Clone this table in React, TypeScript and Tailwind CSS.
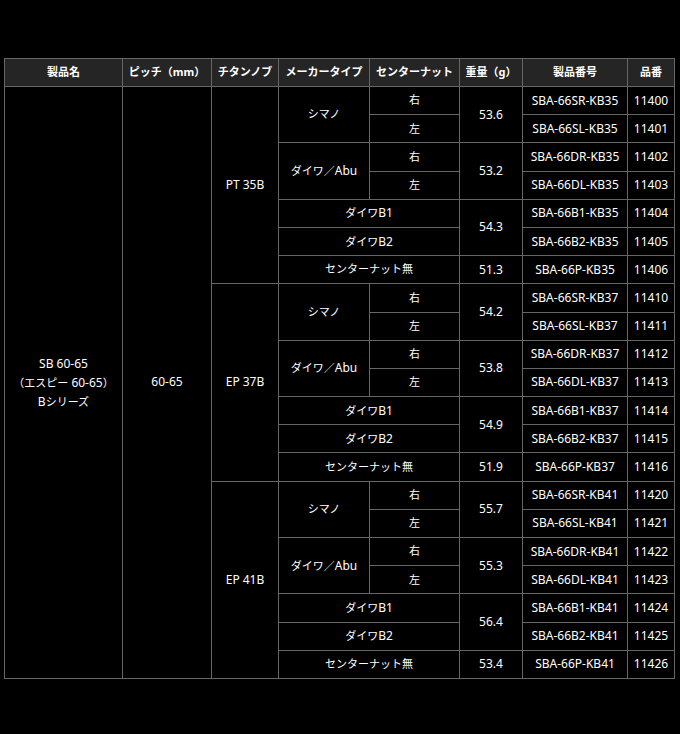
import React from "react";

type Group = {
  knob: string;
  suffix: string;
  weights: [string, string, string, string];
  start: number;
};

const groups: Group[] = [
  { knob: "PT 35B", suffix: "KB35", weights: ["53.6", "53.2", "54.3", "51.3"], start: 11400 },
  { knob: "EP 37B", suffix: "KB37", weights: ["54.2", "53.8", "54.9", "51.9"], start: 11410 },
  { knob: "EP 41B", suffix: "KB41", weights: ["55.7", "55.3", "56.4", "53.4"], start: 11420 },
];

const td = "border border-[#666] text-center align-middle p-0 h-[28.2px]";
// Japanese labels render a touch narrower than the latin parts
const jp = `${td} text-[11px]`;

function GroupRows({ g, first }: { g: Group; first: boolean }) {
  const codes = ["SR", "SL", "DR", "DL", "B1", "B2", "P"];
  const no = (i: number) => String(g.start + i);
  const part = (i: number) => `SBA-66${codes[i]}-${g.suffix}`;
  return (
    <>
      <tr>
        {first && (
          <>
            <td rowSpan={21} className={td}>
              <div className="leading-[19px]">
                SB 60-65
                <br />
                <span className="text-[11px]">（エスピー</span> 60-65<span className="text-[11px]">）</span>
                <br />
                B<span className="text-[11px]">シリーズ</span>
              </div>
            </td>
            <td rowSpan={21} className={td}>
              60-65
            </td>
          </>
        )}
        <td rowSpan={7} className={td}>
          {g.knob}
        </td>
        <td rowSpan={2} className={jp}>
          シマノ
        </td>
        <td className={jp}>右</td>
        <td rowSpan={2} className={td}>
          {g.weights[0]}
        </td>
        <td className={td}>{part(0)}</td>
        <td className={td}>{no(0)}</td>
      </tr>
      <tr>
        <td className={jp}>左</td>
        <td className={td}>{part(1)}</td>
        <td className={td}>{no(1)}</td>
      </tr>
      <tr>
        <td rowSpan={2} className={jp}>
          ダイワ／<span className="text-[12px]">Abu</span>
        </td>
        <td className={jp}>右</td>
        <td rowSpan={2} className={td}>
          {g.weights[1]}
        </td>
        <td className={td}>{part(2)}</td>
        <td className={td}>{no(2)}</td>
      </tr>
      <tr>
        <td className={jp}>左</td>
        <td className={td}>{part(3)}</td>
        <td className={td}>{no(3)}</td>
      </tr>
      <tr>
        <td colSpan={2} className={jp}>
          ダイワ<span className="text-[12px]">B1</span>
        </td>
        <td rowSpan={2} className={td}>
          {g.weights[2]}
        </td>
        <td className={td}>{part(4)}</td>
        <td className={td}>{no(4)}</td>
      </tr>
      <tr>
        <td colSpan={2} className={jp}>
          ダイワ<span className="text-[12px]">B2</span>
        </td>
        <td className={td}>{part(5)}</td>
        <td className={td}>{no(5)}</td>
      </tr>
      <tr>
        <td colSpan={2} className={jp}>
          センターナット無
        </td>
        <td className={td}>{g.weights[3]}</td>
        <td className={td}>{part(6)}</td>
        <td className={td}>{no(6)}</td>
      </tr>
    </>
  );
}

export default function App() {
  const headers = ["製品名", "ピッチ（mm）", "チタンノブ", "メーカータイプ", "センターナット", "重量（g）", "製品番号", "品番"];
  const widths = [118, 89, 67, 91, 90, 63, 105, 47];

  return (
    <div
      className="w-[680px] h-[734px] bg-black text-white text-[12px] pt-[58px] pl-[4px]"
      style={{ fontFamily: '"Noto Sans", "Noto Sans CJK JP", sans-serif' }}
    >
      <table className="table-fixed border-collapse w-[671px]">
        <colgroup>
          {widths.map((w, i) => (
            <col key={i} style={{ width: w }} />
          ))}
        </colgroup>
        <thead>
          <tr className="bg-[#252525]">
            {headers.map((h) => (
              <th key={h} className="border border-[#666] h-[28px] text-[11px] font-bold text-center p-0">
                {h}
              </th>
            ))}
          </tr>
        </thead>
        <tbody>
          {groups.map((g, i) => (
            <GroupRows key={g.knob} g={g} first={i === 0} />
          ))}
        </tbody>
      </table>
    </div>
  );
}
